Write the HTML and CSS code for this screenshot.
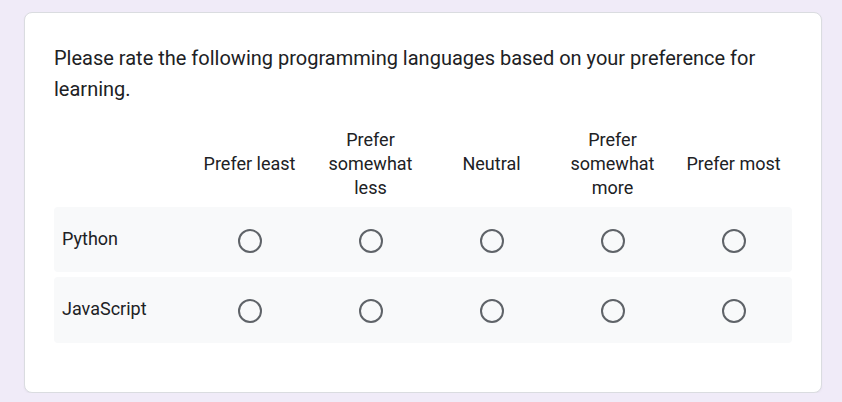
FILE: index.html
```html
<!DOCTYPE html>
<html lang="en">
<head>
<meta charset="utf-8">
<title>Preference grid</title>
<link rel="stylesheet" href="styles.css">
</head>
<body>
<div class="page">
  <section class="card">
    <h1 class="question">Please rate the following programming languages based on your preference for learning.</h1>
    <div class="grid">
      <div class="head-row">
        <div class="head-cell blank"></div>
        <div class="head-cell">Prefer least</div>
        <div class="head-cell">Prefer somewhat less</div>
        <div class="head-cell">Neutral</div>
        <div class="head-cell">Prefer somewhat more</div>
        <div class="head-cell">Prefer most</div>
      </div>
      <div class="row">
        <div class="label">Python</div>
        <div class="cell"><span class="radio"></span></div>
        <div class="cell"><span class="radio"></span></div>
        <div class="cell"><span class="radio"></span></div>
        <div class="cell"><span class="radio"></span></div>
        <div class="cell"><span class="radio"></span></div>
      </div>
      <div class="row">
        <div class="label">JavaScript</div>
        <div class="cell"><span class="radio"></span></div>
        <div class="cell"><span class="radio"></span></div>
        <div class="cell"><span class="radio"></span></div>
        <div class="cell"><span class="radio"></span></div>
        <div class="cell"><span class="radio"></span></div>
      </div>
    </div>
  </section>
</div>
</body>
</html>
```

FILE: styles.css
```css
html, body {
  margin: 0;
  padding: 0;
  background: #f0ebf8;
  font-family: Roboto, "Liberation Sans", Arial, sans-serif;
  color: #202124;
}

.page {
  padding: 12px 0 0 24px;
}

.card {
  box-sizing: border-box;
  width: 798px;
  background: #ffffff;
  border: 1px solid #dadce0;
  border-radius: 8px;
  padding: 30px 29px 49px 29px;
  box-shadow: 0 1px 2px rgba(60, 64, 67, 0.06);
}

.question {
  margin: 0;
  font-size: 20px;
  font-weight: 400;
  line-height: 31px;
  color: #202124;
}

.grid {
  margin-top: 23px;
}

.head-row,
.row {
  display: grid;
  grid-template-columns: 135px repeat(5, 121px);
  align-items: center;
}

.head-row {
  height: 72px;
  padding-bottom: 7px;
}

.head-cell {
  font-size: 18px;
  line-height: 24px;
  text-align: center;
  padding: 0 4px;
}

.row {
  background: #f8f9fa;
  border-radius: 4px;
  height: 65px;
  margin-top: 5px;
}

.row:last-child {
  height: 66px;
}

.head-row + .row {
  margin-top: 0;
}

.label {
  font-size: 18px;
  line-height: 24px;
  padding-left: 8px;
  padding-bottom: 2px;
}

.cell {
  display: flex;
  justify-content: center;
  padding-top: 2px;
}

.radio {
  box-sizing: border-box;
  width: 24px;
  height: 24px;
  border: 2px solid #5f6368;
  border-radius: 50%;
}
```
